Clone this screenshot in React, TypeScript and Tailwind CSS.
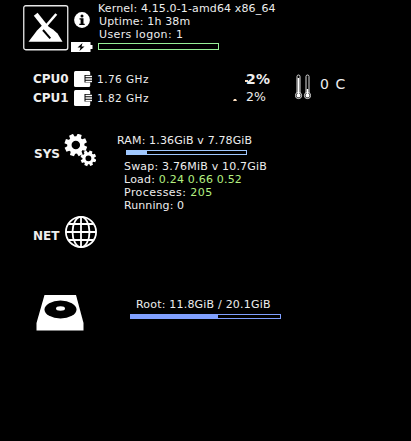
import type { ReactNode } from 'react';

const GEAR_TEETH = [0, 45, 90, 135, 180, 225, 270, 315];

function Logo() {
  return (
    <svg className="block h-[46px] w-[46px]" viewBox="0 0 46 46">
      <rect x="0.75" y="0.75" width="44" height="44" rx="2" fill="#000" stroke="#e8e8e8" strokeWidth="1.3" />
      <path d="M5.500 36.700L14 25.500L19 20.500L26 22L30 24.500L34.500 28.500L39.500 36.700Z" fill="#fff" />
      <path d="M33.300 9L22.500 21.500" stroke="#fff" strokeWidth="2.600" />
      <path d="M20 25L27.300 33.300" stroke="#000" strokeWidth="2" />
      <path d="M12.700 9.300L27 27.300" stroke="#fff" strokeWidth="4.800" />
    </svg>
  );
}

function InfoIcon() {
  return (
    <svg className="block h-4 w-4" viewBox="0 0 16 16">
      <circle cx="8" cy="8" r="7.900" fill="#fff" />
      <circle cx="8" cy="4" r="1.500" fill="#000" />
      <path d="M5.500 6.200H9.500V11.700H10.700V13H5.300V11.700H6.600V7.500H5.500Z" fill="#000" />
    </svg>
  );
}

function BatteryIcon() {
  return (
    <svg className="block h-[10px] w-[22px]" viewBox="0 0 22 10">
      <path d="M0 0H19.500V3H21.500V7H19.500V10H0Z" fill="#fff" />
      <path d="M11.500 1L6.500 5.500H9.500L8.500 9L13.500 4.500H10.500Z" fill="#000" />
    </svg>
  );
}

function CpuIcon() {
  return (
    <svg className="block h-4 w-[18px]" viewBox="0 0 18 16">
      <rect x="0" y="0" width="16.200" height="16" rx="1.500" fill="#fff" />
      <path d="M10.500 4H18V11.500H10.500Z" fill="#000" />
      <path d="M11.500 5.500H18M11.500 8H18M11.500 10.500H18" stroke="#fff" strokeWidth="1.300" />
    </svg>
  );
}

function Gear({ x, y, r }: { x: number; y: number; r: number }) {
  return (
    <g transform={`translate(${x} ${y}) scale(${r / 10})`}>
      {GEAR_TEETH.map((a) => (
        <path key={a} d="M-2.300 -6L-1.900 -10H1.900L2.300 -6Z" fill="#fff" transform={`rotate(${a + 20})`} />
      ))}
      <circle r="5.700" fill="none" stroke="#fff" strokeWidth="3.900" />
    </g>
  );
}

function GearsIcon() {
  return (
    <svg className="block h-[34px] w-8" viewBox="0 0 32 34">
      <Gear x={11.8} y={11} r={11.3} />
      <Gear x={24.4} y={24.3} r={7.8} />
    </svg>
  );
}

function GlobeIcon() {
  return (
    <svg className="block h-8 w-8" viewBox="0 0 32 32" fill="none" stroke="#fff" strokeWidth="1.800">
      <circle cx="16" cy="16" r="15.100" />
      <ellipse cx="16" cy="16" rx="8.500" ry="15.100" />
      <path d="M16 1V31M1 16H31M4 8H28M4 24H28" />
    </svg>
  );
}

function Thermometers() {
  return (
    <svg className="block h-[26px] w-4" viewBox="0 0 16 26" fill="none">
      {[0, 9].map((x) => (
        <g key={x} transform={`translate(${x} 0)`}>
          <path d="M2 19V2.500Q2 1 3.500 1Q5 1 5 2.500V19" stroke="#ddd" strokeWidth="1" />
          <circle cx="3.500" cy="21.500" r="3.100" stroke="#ddd" strokeWidth="1" fill="#000" />
          <circle cx="3.500" cy="21.500" r="2" fill="#fff" />
          <path d={x === 0 ? 'M3.500 4V21' : 'M3.500 15V21'} stroke="#fff" strokeWidth="1.600" />
        </g>
      ))}
    </svg>
  );
}

function DiskIcon() {
  return (
    <svg className="block h-9 w-12" viewBox="0 0 48 36">
      <path d="M8.500 0H40L47.500 28V35.500H0.500V28Z" fill="#fff" />
      <ellipse cx="24.500" cy="14.500" rx="16" ry="9" fill="#000" />
      <ellipse cx="24.500" cy="13.500" rx="4.500" ry="2.200" fill="#fff" />
    </svg>
  );
}

function Line({ children, className = '' }: { children: ReactNode; className?: string }) {
  return <div className={`h-[13px] whitespace-pre text-[11px] leading-[13px] ${className}`}>{children}</div>;
}

function CpuRow({ name, speed }: { name: string; speed: string }) {
  return (
    <div className="flex h-[19px] items-center">
      <span className="w-[41px] text-[12px] leading-4 font-bold">{name}</span>
      <CpuIcon />
      <span className="mt-px ml-[5px] text-[10.5px] leading-4 tracking-[0.45px]">{speed}</span>
    </div>
  );
}

export default function App() {
  return (
    <main className="flex h-[441px] w-[411px] flex-col overflow-hidden bg-black font-['DejaVu_Sans',sans-serif] text-[#eee]">
      <header className="flex h-[69px] pl-[23px]">
        <div className="pt-[5px]">
          <Logo />
        </div>
        <div className="ml-0.5 flex w-[27px] flex-col pt-3">
          <div className="pl-[3px]">
            <InfoIcon />
          </div>
          <div className="mt-3.5">
            <BatteryIcon />
          </div>
        </div>
        <div className="pt-0.5">
          <Line className="tracking-[0.14px]">Kernel: 4.15.0-1-amd64 x86_64</Line>
          <Line className="pl-px tracking-[0.15px]">Uptime: 1h 38m</Line>
          <Line className="pl-px tracking-[0.38px]">Users logon: 1</Line>
          <div className="mt-0.5 h-[7px] w-[121px] border border-[#98f098]" />
        </div>
      </header>

      <section className="flex h-[65px] pl-[33px]">
        <div className="w-[198px]">
          <CpuRow name="CPU0" speed="1.76 GHz" />
          <CpuRow name="CPU1" speed="1.82 GHz" />
        </div>
        <div className="w-[64px]">
          <div className="flex h-[19px] items-center">
            <span className="mt-[5px] ml-[14px] h-0.5 w-[3px] bg-[#ffe0c0]" />
            <span className="-ml-0.5 text-[14px] leading-4 font-bold tracking-[0.3px]">2%</span>
          </div>
          <div className="flex h-[19px] items-center">
            <span className="mt-[5px] ml-[2px] h-0.5 w-1 bg-[#ffe0c0] [clip-path:polygon(25%_0,75%_0,100%_100%,0_100%)]" />
            <span className="-mt-px ml-[9px] text-[12.5px] leading-4">2%</span>
          </div>
        </div>
        <div className="pt-[5px]">
          <Thermometers />
        </div>
        <span className="ml-[9px] pt-[5px] text-[14px] leading-5 tracking-[1.1px]">0 C</span>
      </section>

      <section className="flex h-[82px] pl-[34px]">
        <span className="w-[30px] pt-3.5 text-[12px] leading-[13px] font-bold">SYS</span>
        <GearsIcon />
        <div className="ml-[21px]">
          <Line className="tracking-[0.14px]">RAM: 1.36GiB v 7.78GiB</Line>
          <div className="mt-[3px] ml-[9px] h-[5px] w-[121px] border border-[#a0c8ff]">
            <div className="h-full w-5 bg-[#a0c8ff]" />
          </div>
          <div className="mt-[5px] pl-[7px]">
            <Line className="tracking-[0.19px]">Swap: 3.76MiB v 10.7GiB</Line>
            <Line className="tracking-[0.2px]">Load: <span className="text-[#b4f080]">0.24 0.66 0.52</span></Line>
            <Line className="tracking-[0.44px]">Processes: <span className="text-[#b4f080]">205</span></Line>
            <Line className="tracking-[0.08px]">Running: 0</Line>
          </div>
        </div>
      </section>

      <section className="flex h-[79px] pl-[33px]">
        <span className="w-8 pt-3.5 text-[12px] leading-[13px] font-bold">NET</span>
        <GlobeIcon />
      </section>

      <section className="flex pl-9">
        <DiskIcon />
        <div className="ml-[46px] pt-[3px]">
          <Line className="pl-[6px] tracking-[0.2px]">Root: 11.8GiB / 20.1GiB</Line>
          <div className="mt-[3px] h-[5px] w-[151px] border border-[#80a0ff]">
            <div className="h-full w-[87px] bg-[#80a0ff]" />
          </div>
        </div>
      </section>
    </main>
  );
}
